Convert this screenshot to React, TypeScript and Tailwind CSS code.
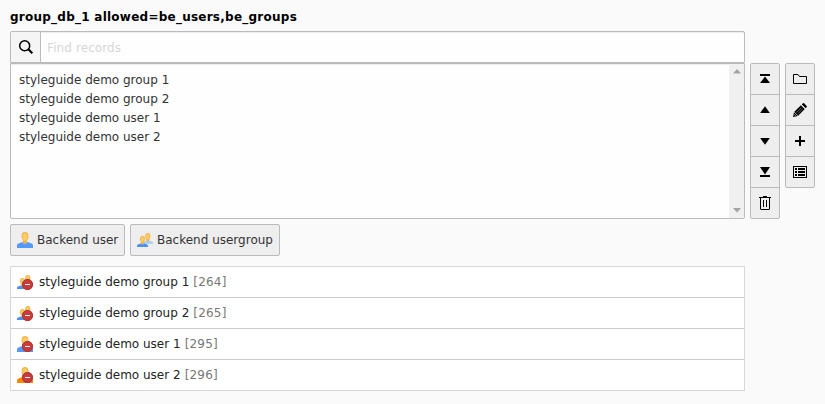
import React from "react";

type IconProps = { children: React.ReactNode };

function Icon({ children }: IconProps) {
  return (
    <svg width="16" height="16" viewBox="0 0 16 16" className="block shrink-0">
      {children}
    </svg>
  );
}

function SearchIcon() {
  return (
    <Icon>
      <circle cx="6.7" cy="6.7" r="5" fill="none" stroke="#000" strokeWidth="1.5" />
      <path d="M10.300 10.300l4 4" stroke="#000" strokeWidth="2.100" />
    </Icon>
  );
}

const moveIcons = [
  { label: "Move to top", icon: <Icon><path d="M3 3h10v2H3zM8 5.600L13 12H3z" /></Icon> },
  { label: "Move up", icon: <Icon><path d="M8 4.200L12.800 11H3.200z" /></Icon> },
  { label: "Move down", icon: <Icon><path d="M8 11.800L12.800 5H3.200z" /></Icon> },
  { label: "Move to bottom", icon: <Icon><path d="M3 11h10v2H3zM8 10.400L13 3H3z" /></Icon> },
  {
    label: "Remove",
    icon: (
      <Icon>
        <path fillRule="evenodd" d="M6 1h4v1h4v1h-1v11l-1 1H4l-1-1V3H2V2h4zM4 3v11h8V3z" />
        <path d="M6 5h1v7H6zM9 5h1v7H9z" />
      </Icon>
    ),
  },
];

const editIcons = [
  {
    label: "Browse",
    icon: (
      <Icon>
        <path d="M1.500 12.500v-9h4.500l1.500 2h7v7z" fill="none" stroke="#000" />
      </Icon>
    ),
  },
  {
    label: "Edit",
    icon: (
      <Icon>
        <path d="M1 15l1-4.800 3.800 3.800z" />
        <path d="M2.300 9.800l6.600-6.600 3.900 3.900-6.600 6.600z" />
        <path d="M9.800 2.400l1.100-1.100q.6-.6 1.200 0l2.600 2.600q.6.6 0 1.200l-1.100 1.100z" />
        <path d="M4.500 10.400l5-5M5.900 11.700l5-5" stroke="#999" strokeWidth=".6" />
        <path d="M9.400 2.800l3.900 3.900M2.200 12.400l1.400 1.400" stroke="#eee" strokeWidth=".8" />
      </Icon>
    ),
  },
  { label: "Add", icon: <Icon><path d="M7 3h2v4h4v2H9v4H7V9H3V7h4z" /></Icon> },
  {
    label: "List",
    icon: (
      <Icon>
        <path fillRule="evenodd" d="M1 2h14v12H1zM2 3v10h12V3z" />
        <path d="M3 4h2v2H3zM6 4h7v2H6zM3 7h2v2H3zM6 7h7v2H6zM3 10h2v2H3zM6 10h7v2H6z" />
      </Icon>
    ),
  },
];

function Remove() {
  return (
    <>
      <circle cx="10.500" cy="10.500" r="5.500" fill="#c83c3c" />
      <circle cx="10.500" cy="10.500" r="5" fill="none" stroke="#b23535" />
      <path d="M8 10h5v1H8z" fill="#fff" />
    </>
  );
}

function UserIcon({ body = "#5599ff", removed = false }: { body?: string; removed?: boolean }) {
  return (
    <Icon>
      <path d="M0 16v-2.500Q0 11.800 2 11.300L5.500 10h5l3.500 1.300q2 .5 2 2.200V16z" fill={body} />
      <path d="M6 9h4v2.200q-2 1.800-4 0z" fill="#e8b04c" />
      <path d="M8 0c2.500 0 3.600 1.600 3.300 3.800C11.800 4 11.600 6 10.900 6.400 10.400 8.600 9.400 10 8 10S5.600 8.600 5.100 6.400C4.400 6 4.200 4 4.700 3.800 4.400 1.600 5.500 0 8 0z" fill="#f0b84d" />
      <path d="M8 1.600c1.700 0 2.500.9 2.400 2.500C10.300 6.500 9.400 8.700 8 8.700S5.700 6.500 5.600 4.100C5.500 2.500 6.300 1.600 8 1.600z" fill="#ffcc66" />
      {removed && <Remove />}
    </Icon>
  );
}

function GroupIcon({ removed = false }: { removed?: boolean }) {
  return (
    <Icon>
      <path d="M7 12V9.500L9 9h4l2 .500q1 .3 1 1V12z" fill="#a6d2ff" />
      <path d="M9.500 7h2.700v2.200q-1.300.8-2.700 0z" fill="#e8b04c" />
      <path d="M10.800 1c2 0 2.700 1 2.500 2.700.6.400.2 1.800-.3 1.900-.3 1.700-1 2.700-2.200 2.700S8.900 7.300 8.600 5.600C8.100 5.300 7.900 4 8.300 3.700 8.200 2 9 1 10.800 1z" fill="#f2ba50" />
      <path d="M10.800 2.200c1 0 1.500.6 1.400 1.700-.1 1.700-.6 3-1.400 3s-1.300-1.300-1.400-3c-.1-1.100.4-1.700 1.400-1.700z" fill="#ffcc66" />
      <path d="M0 15v-1.500q0-.7 1-1L3.500 11.600h4l2.500.9q1 .3 1 1V15z" fill="#4b90fa" />
      <path d="M4.200 10h2.700v2.200q-1.300.8-2.700 0z" fill="#e8b04c" />
      <path d="M5.500 4c2 0 2.700 1 2.500 2.700.6.400.2 1.800-.3 1.900-.3 1.700-1 2.700-2.200 2.700s-1.900-1-2.200-2.700C2.800 8.300 2.600 7 3 6.700 2.900 5 3.700 4 5.500 4z" fill="#f2ba50" />
      <path d="M5.500 5.200c1 0 1.500.6 1.400 1.700-.1 1.700-.6 3-1.400 3s-1.300-1.300-1.400-3c-.1-1.100.4-1.700 1.400-1.700z" fill="#ffcc66" />
      {removed && <Remove />}
    </Icon>
  );
}

function ButtonColumn({ items }: { items: { label: string; icon: React.ReactNode }[] }) {
  return (
    <div className="flex flex-col divide-y divide-[#bbb] self-start rounded-[2px] border border-[#bbb] bg-[#eee]">
      {items.map((item) => (
        <button key={item.label} aria-label={item.label} className="flex h-[31px] w-7 items-center justify-center last:h-[30px]">
          {item.icon}
        </button>
      ))}
    </div>
  );
}

const options = ["styleguide demo group 1", "styleguide demo group 2", "styleguide demo user 1", "styleguide demo user 2"];

const records = [
  { title: options[0], uid: 264, icon: <GroupIcon removed /> },
  { title: options[1], uid: 265, icon: <GroupIcon removed /> },
  { title: options[2], uid: 295, icon: <UserIcon removed /> },
  { title: options[3], uid: 296, icon: <UserIcon body="#ff8700" removed /> },
];

export default function App() {
  return (
    <div className="h-[404px] w-[825px] overflow-hidden bg-[#fafafa] px-[10px] pt-2 font-['DejaVu_Sans',sans-serif] text-[12px] leading-[18px] text-[#333]">
      <div className="mb-[5px] font-bold tracking-[0.245px] text-black">group_db_1 allowed=be_users,be_groups</div>
      <div className="flex h-8 w-[735px] rounded-t-[2px] border border-[#bbb] bg-[#fefefe]">
        <div className="flex w-[30px] items-center border-r border-[#bbb] bg-[#f5f5f5] pl-[7px]">
          <SearchIcon />
        </div>
        <input aria-label="Find records" placeholder="Find records" className="min-w-0 flex-1 px-1.5 pt-px tracking-[0.1px] shadow-[inset_0_1px_1px_rgba(0,0,0,0.075)] outline-none placeholder:text-[#d7d7d7]" />
      </div>
      <div className="flex gap-[5px]">
        <div className="flex h-[156px] w-[735px] rounded-b-[2px] border border-[#bbb] bg-[#fefefe] shadow-[inset_0_1px_1px_rgba(0,0,0,0.075)]">
          <div className="flex-1 px-2 pt-[7px]">
            {options.map((option) => (
              <div key={option} className="h-[19px] leading-[19px]">{option}</div>
            ))}
          </div>
          <div className="flex w-[15px] flex-col items-center justify-between bg-[#f0f0f0] py-[5px]">
            <svg width="8" height="5" viewBox="0 0 8 5"><path d="M4 0l4 4.500H0z" fill="#a3a3a3" /></svg>
            <svg width="8" height="5" viewBox="0 0 8 5"><path d="M4 4.500L8 0H0z" fill="#a3a3a3" /></svg>
          </div>
        </div>
        <ButtonColumn items={moveIcons} />
        <ButtonColumn items={editIcons} />
      </div>
      <div className="mt-[5px] flex gap-[5px]">
        <button className="flex h-8 w-[115px] items-center gap-1 rounded-[2px] border border-[#bbb] bg-[#eee] pl-1.5 whitespace-nowrap">
          <UserIcon />
          Backend user
        </button>
        <button className="flex h-8 w-[150px] items-center gap-1 rounded-[2px] border border-[#bbb] bg-[#eee] pl-1.5 whitespace-nowrap">
          <GroupIcon />
          Backend usergroup
        </button>
      </div>
      <div className="mt-[10px] w-[735px] divide-y divide-[#ccc] border border-[#d7d7d7] bg-white">
        {records.map((record) => (
          <div key={record.uid} className="flex h-[31px] items-center pl-1.5 last:h-[30px]">
            {record.icon}
            <span className="ml-1.5 text-[#212424]">{record.title}</span>
            <span className="ml-1 tracking-[0.2px] text-[#777]">[{record.uid}]</span>
          </div>
        ))}
      </div>
    </div>
  );
}
